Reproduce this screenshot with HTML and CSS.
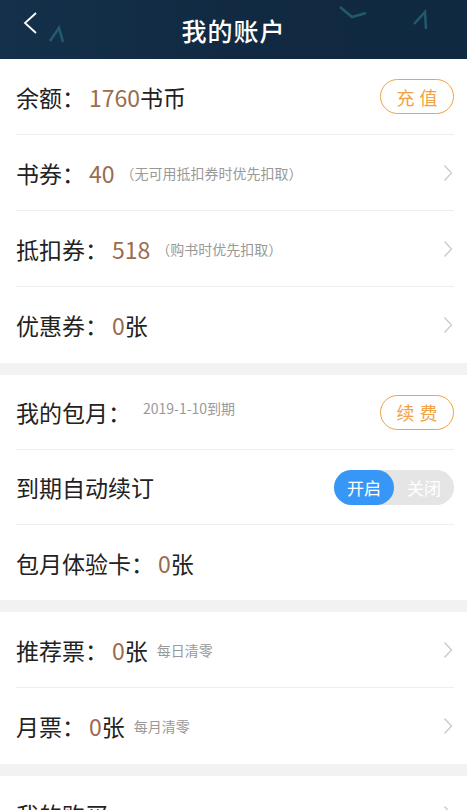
FILE: index.html
```html
<!DOCTYPE html>
<html lang="zh-CN">
<head>
    <meta charset="UTF-8">
    <title>我的账户</title>
    <link rel="stylesheet" href="styles.css">
</head>
<body>
<div class="header">
    <svg class="deco" width="467" height="59" viewBox="0 0 467 59">
        <path d="M50 41 L59 28 L63 42" stroke="#2b6f7c" stroke-width="2.5" fill="none" opacity="0.7"/>
        <path d="M340 7 L352 17 L366 13" stroke="#2b6f7c" stroke-width="2.5" fill="none" opacity="0.7"/>
        <path d="M414 24 L425 12 L426 29" stroke="#2b6f7c" stroke-width="2.5" fill="none" opacity="0.7"/>
    </svg>
    <a class="back">
        <svg width="16" height="24" viewBox="0 0 16 24"><path d="M14 2 L3 12 L14 22" stroke="#fff" stroke-width="1.8" fill="none"/></svg>
    </a>
    <h1 class="title">我的账户</h1>
</div>

<div class="section">
    <div class="row">
        <span class="label">余额：</span><span class="num">1760</span><span class="unit">书币</span>
        <span class="btn">充值</span>
    </div>
    <div class="row">
        <span class="label">书券：</span><span class="num">40</span><span class="hint">（无可用抵扣券时优先扣取）</span>
        <span class="arrow"><svg width="10" height="18" viewBox="0 0 10 18"><path d="M1.5 1.5 L8.5 9 L1.5 16.5" stroke="#ccc" stroke-width="1.4" fill="none"/></svg></span>
    </div>
    <div class="row">
        <span class="label">抵扣券：</span><span class="num">518</span><span class="hint">（购书时优先扣取）</span>
        <span class="arrow"><svg width="10" height="18" viewBox="0 0 10 18"><path d="M1.5 1.5 L8.5 9 L1.5 16.5" stroke="#ccc" stroke-width="1.4" fill="none"/></svg></span>
    </div>
    <div class="row">
        <span class="label">优惠券：</span><span class="num">0</span><span class="unit">张</span>
        <span class="arrow"><svg width="10" height="18" viewBox="0 0 10 18"><path d="M1.5 1.5 L8.5 9 L1.5 16.5" stroke="#ccc" stroke-width="1.4" fill="none"/></svg></span>
    </div>
</div>

<div class="section month">
    <div class="row">
        <span class="label">我的包月：</span><span class="hint date">2019-1-10到期</span>
        <span class="btn">续费</span>
    </div>
    <div class="row">
        <span class="label">到期自动续订</span>
        <span class="switch"><span class="on">开启</span><span class="off">关闭</span></span>
    </div>
    <div class="row">
        <span class="label">包月体验卡：</span><span class="num">0</span><span class="unit">张</span>
    </div>
</div>

<div class="section">
    <div class="row">
        <span class="label">推荐票：</span><span class="num">0</span><span class="unit">张</span><span class="hint tip">每日清零</span>
        <span class="arrow"><svg width="10" height="18" viewBox="0 0 10 18"><path d="M1.5 1.5 L8.5 9 L1.5 16.5" stroke="#ccc" stroke-width="1.4" fill="none"/></svg></span>
    </div>
    <div class="row">
        <span class="label">月票：</span><span class="num">0</span><span class="unit">张</span><span class="hint tip">每月清零</span>
        <span class="arrow"><svg width="10" height="18" viewBox="0 0 10 18"><path d="M1.5 1.5 L8.5 9 L1.5 16.5" stroke="#ccc" stroke-width="1.4" fill="none"/></svg></span>
    </div>
</div>

<div class="section">
    <div class="row">
        <span class="label">我的购买</span>
        <span class="arrow"><svg width="10" height="18" viewBox="0 0 10 18"><path d="M1.5 1.5 L8.5 9 L1.5 16.5" stroke="#ccc" stroke-width="1.4" fill="none"/></svg></span>
    </div>
</div>
</body>
</html>
```

FILE: styles.css
```css
body {
    margin: 0;
    background: #f2f2f2;
    font-family: "Noto Sans CJK SC", "Noto Sans", sans-serif;
    color: #222;
}

.header {
    position: relative;
    height: 59px;
    background: linear-gradient(90deg, #14304a 0%, #112a42 50%, #0f2940 100%);
    display: flex;
    align-items: center;
    justify-content: center;
    overflow: hidden;
}
.deco {
    position: absolute;
    left: 0;
    top: 0;
}
.back {
    position: absolute;
    left: 22px;
    top: 11px;
}
.title {
    position: relative;
    margin: 0;
    font-size: 25px;
    font-weight: 500;
    color: #fff;
    letter-spacing: 1px;
}

.section {
    background: #fff;
    padding: 0 13px 0 16px;
    margin-bottom: 12px;
}

.row {
    display: flex;
    align-items: center;
    box-sizing: border-box;
    height: 76px;
    border-bottom: 1px solid #eee;
}
.row:last-child {
    border-bottom: none;
}
.month .row {
    height: 75px;
}

.label {
    font-size: 23px;
}
.num {
    font-size: 23px;
    color: #9b6b4c;
    margin-left: 4px;
}
.unit {
    font-size: 23px;
}
.hint {
    font-size: 14px;
    color: #999;
    margin-left: 6px;
}
.date {
    margin-left: 12px;
    margin-top: -8px;
}
.tip {
    margin-left: 9px;
}

.btn {
    margin-left: auto;
    width: 72px;
    height: 33px;
    border: 1.5px solid #f0a244;
    border-radius: 18px;
    color: #f0a244;
    font-size: 18px;
    letter-spacing: 5px;
    text-indent: 5px;
    display: flex;
    align-items: center;
    justify-content: center;
}

.arrow {
    margin-left: auto;
    margin-right: 1px;
    display: flex;
}

.switch {
    margin-left: auto;
    display: flex;
    width: 120px;
    height: 35px;
    border-radius: 18px;
    background: #e5e5e5;
    font-size: 17px;
    color: #fff;
}
.switch span {
    flex: 1;
    display: flex;
    align-items: center;
    justify-content: center;
    border-radius: 18px;
}
.switch .on {
    background: #3797f7;
}
```
